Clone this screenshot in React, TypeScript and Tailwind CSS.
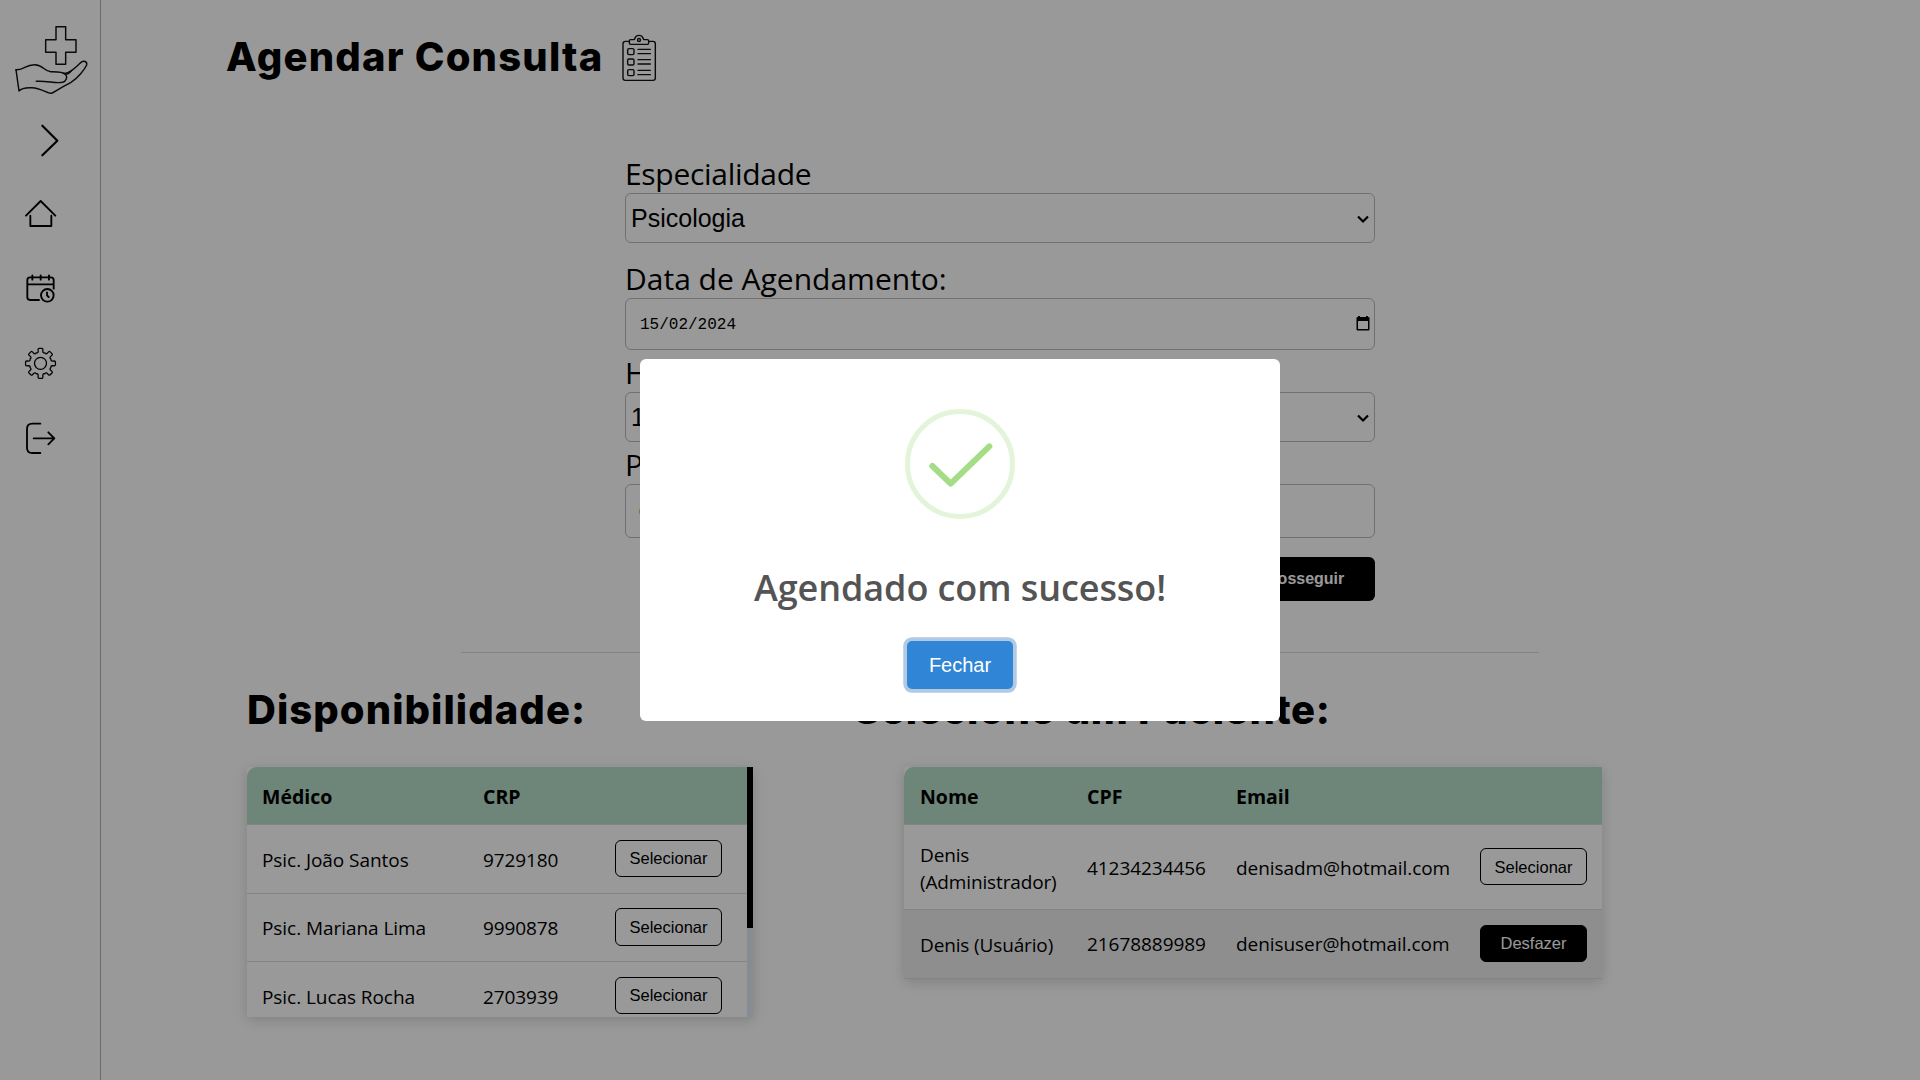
import type { ReactNode } from 'react';

const doctors = [
  { name: 'Psic. João Santos', crp: '9729180' },
  { name: 'Psic. Mariana Lima', crp: '9990878' },
  { name: 'Psic. Lucas Rocha', crp: '2703939' },
];

const patients = [
  { name: 'Denis (Administrador)', cpf: '41234234456', email: 'denisadm@hotmail.com', selected: false },
  { name: 'Denis (Usuário)', cpf: '21678889989', email: 'denisuser@hotmail.com', selected: true },
];

function gearPath(cx: number, cy: number) {
  const at = (deg: number, r: number) => {
    const a = (deg * Math.PI) / 180;
    return `${(cx + r * Math.cos(a)).toFixed(1)} ${(cy + r * Math.sin(a)).toFixed(1)}`;
  };
  let d = '';
  for (let i = 0; i < 8; i++) {
    const a = i * 45 - 90;
    d += `${i === 0 ? 'M' : 'L'}${at(a - 11, 36)} L${at(a - 10, 42)} Q${at(a - 9, 45)} ${at(a - 6, 45)} L${at(a + 6, 45)} Q${at(a + 9, 45)} ${at(a + 10, 42)} L${at(a + 11, 36)} Q${at(a + 15, 31)} ${at(a + 22.5, 34)} Q${at(a + 30, 31)} ${at(a + 34, 36)} `;
  }
  return d + 'Z';
}

function SideIcon({ viewBox, children }: { viewBox: string; children: ReactNode }) {
  return (
    <svg className="ml-[22px] size-[37px]" viewBox={viewBox} fill="none" stroke="black" strokeWidth="5.600" strokeLinecap="round" strokeLinejoin="round">
      {children}
    </svg>
  );
}

function Sidebar() {
  return (
    <aside className="flex w-[101px] shrink-0 flex-col border-r border-[#b5b5b5] pt-5">
      <svg className="ml-[10px] size-[85px] shrink-0" viewBox="0 0 255 255" fill="none" stroke="#111" strokeWidth="4.400" strokeLinejoin="round" strokeLinecap="round">
        <path d="M138 20h29v39h31v38h-31v36h-29V97h-31V59h31z" />
        <path d="M18 149C44 151 44 134 74 134C100 134 102 154 122 155C140 155 158 154 167 163C173 172 169 184 158 187C136 191 112 182 79 184" />
        <path d="M18 149L27 213C38 202 52 204 66 203C92 204 112 220 124 220C132 218 144 207 182 188C204 174 224 148 230 135C232 124 222 121 213 127C200 138 186 157 163 161" />
        <path d="M160 160C174 159 181 155 188 149C182 160 174 164 167 164z" fill="#222" strokeWidth="1.5" />
      </svg>
      <svg className="mt-[15px] ml-10 h-10 w-5 shrink-0" viewBox="120 360 60 120" fill="none" stroke="black" strokeWidth="6.500" strokeLinecap="round" strokeLinejoin="round">
        <path d="M127 377l45 45-45 44" />
      </svg>
      <nav className="mt-[35px] flex flex-col gap-[38px]">
        <SideIcon viewBox="66 585 111 111">
          <path d="M78 647l44-44 44 44M91 647v31h63v-31" />
        </SideIcon>
        <SideIcon viewBox="66 90 111 111">
          <path d="M117 180H90q-8 0-8-8v-52q0-8 8-8h63q8 0 8 8v26M82 133h79M97 106v13M122 106v13M147 106v13" />
          <circle cx="142" cy="166" r="19" />
          <path d="M141 157v9l5 5" />
        </SideIcon>
        <SideIcon viewBox="66 315 111 111">
          <path d={gearPath(121.5, 370)} strokeWidth="3.8" />
          <circle cx="121.5" cy="370" r="18" strokeWidth="3.8" />
        </SideIcon>
        <SideIcon viewBox="66 540 111 111">
          <path d="M121 551H97q-16 0-16 16v56q0 16 16 16h24M101 595h62M145 577l18 18-18 18" />
        </SideIcon>
      </nav>
    </aside>
  );
}

function ClipboardIcon() {
  return (
    <svg className="ml-[17px] h-[50px] w-[38px] shrink-0" viewBox="1230 66 114 150" fill="none" stroke="#111" strokeWidth="4.2" strokeLinecap="round" strokeLinejoin="round">
      <path d="M1258 91h-12q-7 0-7 7v103q0 7 7 7h83q7 0 7-7V98q0-7-7-7h-12" />
      <path d="M1262 100h50q4 0 4-4v-6q0-4-4-4h-9q-3 0-4-5-3-8-12-8t-12 8q-1 5-4 5h-9q-4 0-4 4v6q0 4 4 4z" />
      <circle cx="1287" cy="87" r="4.5" />
      {[113, 144, 176].map((y) => (
        <g key={y}>
          <rect x="1253" y={y} width="19" height="18" rx="4" />
          <path d={`M1284 ${y + 2}h37M1284 ${y + 15}h37`} />
        </g>
      ))}
    </svg>
  );
}

function Chevron() {
  return (
    <svg className="h-2.5 w-3.5" viewBox="0 0 14 10" fill="none" stroke="black" strokeWidth="2.2">
      <path d="M2 2.500l5 5 5-5" />
    </svg>
  );
}

function Label({ children }: { children: ReactNode }) {
  return <div className="h-10 pt-px text-[30px] leading-[40px]">{children}</div>;
}

function SelectBox({ value }: { value: string }) {
  return (
    <div className="flex h-[50px] items-center justify-between rounded-[6px] border border-[#bbb] pt-px pr-1 pl-[5px] font-['Liberation_Sans',sans-serif] text-[25px]">
      <span>{value}</span>
      <Chevron />
    </div>
  );
}

function RowButton({ selected = false }: { selected?: boolean }) {
  return selected ? (
    <button className="h-[37.5px] w-[107px] rounded-[6px] border border-black bg-black font-['Liberation_Sans',sans-serif] text-[16.5px] leading-[34px] text-white">Desfazer</button>
  ) : (
    <button className="h-[37.5px] w-[107px] rounded-[6px] border border-black bg-white font-['Liberation_Sans',sans-serif] text-[16.5px] leading-[34px]">Selecionar</button>
  );
}

function DoctorTable() {
  return (
    <div className="flex h-[250px] w-[506px] overflow-hidden bg-white shadow-[0_3px_12px_rgba(0,0,0,0.16)]">
      <div className="w-[500px] shrink-0">
        <div className="grid h-[58px] grid-cols-[221px_132px_107px] items-center rounded-tl-[10px] border-b border-[#ddd] bg-[#b7decb] pt-0.5 pl-[15px] text-[19.5px] font-bold">
          <span>Médico</span>
          <span>CRP</span>
        </div>
        {doctors.map((d) => (
          <div key={d.crp} className="grid h-[68.6px] grid-cols-[221px_132px_107px] items-center border-b border-[#ddd] pl-[15px] text-[19px]">
            <span className="pt-0.5 tracking-[-0.06px]">{d.name}</span>
            <span className="pt-0.5 tracking-[-0.1px]">{d.crp}</span>
            <div className="-mt-px h-[37.5px]"><RowButton /></div>
          </div>
        ))}
      </div>
      <div className="w-[6px] bg-[#e1e8f4]">
        <div className="h-[161px] bg-black" />
      </div>
    </div>
  );
}

function PatientTable() {
  return (
    <div className="w-[698px] bg-white shadow-[0_3px_12px_rgba(0,0,0,0.16)]">
      <div className="grid h-[58px] grid-cols-[167px_149px_244px_107px] items-center rounded-tl-[10px] border-b border-[#ddd] bg-[#b7decb] pt-0.5 pl-4 text-[19.5px] font-bold">
        <span>Nome</span>
        <span>CPF</span>
        <span>Email</span>
      </div>
      {patients.map((p) => (
        <div
          key={p.cpf}
          className={`grid grid-cols-[167px_149px_244px_107px] items-center border-b border-[#ddd] pl-4 text-[19px] leading-[27px] ${p.selected ? 'h-[68.5px] bg-[#ededed]' : 'h-[85px]'}`}
        >
          <span className="w-[145px] pt-[3px] tracking-[-0.14px]">{p.name}</span>
          <span className="pt-0.5 tracking-[-0.06px]">{p.cpf}</span>
          <span className="pt-0.5 tracking-[-0.06px]">{p.email}</span>
          <div className="-mt-px h-[37.5px]"><RowButton selected={p.selected} /></div>
        </div>
      ))}
    </div>
  );
}

function SuccessModal() {
  return (
    <div className="fixed inset-0 flex items-center justify-center bg-black/40">
      <div className="flex h-[362px] w-[640px] flex-col items-center rounded-[6px] bg-white pt-[50px]">
        <svg className="size-[110px]" viewBox="0 0 330 330" fill="none">
          <circle cx="165" cy="165" r="157.5" stroke="#a5dc86" strokeOpacity="0.3" strokeWidth="15" />
          <path d="M82 171l55 53 116-112" stroke="#a5dc86" strokeWidth="18" strokeLinecap="round" strokeLinejoin="round" />
        </svg>
        <h2 className="mt-[45px] text-[36px] leading-[48px] font-semibold tracking-[-0.09px] text-[#545454]">Agendado com sucesso!</h2>
        <button className="mt-[29px] h-12 w-[106px] shrink-0 rounded-[5px] bg-[#3085d6] font-['Liberation_Sans',sans-serif] text-[20px] text-white shadow-[0_0_0_3.75px_rgba(100,150,200,0.5)]">
          Fechar
        </button>
      </div>
    </div>
  );
}

export default function App() {
  return (
    <div className="flex h-screen w-full overflow-hidden bg-white font-['Open_Sans','Noto_Sans',sans-serif] text-black">
      <Sidebar />
      <main className="flex grow flex-col pt-[33px]">
        <header className="flex h-[50px] pl-[125px]">
          <h1 className="font-['Inter',sans-serif] text-[40px] leading-[48px] font-extrabold tracking-[1.2px] whitespace-nowrap">Agendar Consulta</h1>
          <ClipboardIcon />
        </header>

        <form className="mt-[70px] ml-[524px] flex w-[750px] flex-col">
          <Label><span className="tracking-[-0.3px]">Especialidade</span></Label>
          <SelectBox value="Psicologia" />
          <div className="mt-[15px]"><Label>Data de Agendamento:</Label></div>
          <div className="flex h-[52px] items-center justify-between rounded-[6px] border border-[#bbb] pr-[4px] pl-[14px]">
            <span className="pt-px font-['Liberation_Mono',monospace] text-[16px]">15/02/2024</span>
            <svg className="mb-[2px] h-[15px] w-[14px]" viewBox="0 0 14 15">
              <path d="M2 0h2v1h6V0h2v1h.5Q13.500 1 13.500 2v11.500q0 1-1 1h-11q-1 0-1-1V2q0-1 1-1H2zM2 5v8h10V5z" fillRule="evenodd" />
            </svg>
          </div>
          <div className="mt-0.5"><Label>Horário:</Label></div>
          <SelectBox value="10:00" />
          <div className="mt-0.5"><Label>Paciente:</Label></div>
          <div className="flex h-[54px] items-center rounded-[6px] border border-[#bbb] pl-[13px] font-['Liberation_Sans',sans-serif] text-[16px]">denisuser@hotmail.com</div>
          <button type="button" className="mt-[19px] h-11 w-[145px] self-end rounded-[6px] bg-black font-['Liberation_Sans',sans-serif] text-[16px] font-bold text-white">
            Prosseguir
          </button>
        </form>

        <hr className="mt-[51px] ml-[360px] w-[1078px] border-[#ddd]" />

        <div className="mt-[33px] flex pl-[146px]">
          <section className="w-[608px] shrink-0">
            <h2 className="mb-[33px] font-['Inter',sans-serif] text-[40px] leading-[48px] font-extrabold tracking-[1.05px]">Disponibilidade:</h2>
            <DoctorTable />
          </section>
          <section className="shrink-0">
            <h2 className="mb-[33px] -ml-px font-['Inter',sans-serif] text-[40px] leading-[48px] font-extrabold tracking-[0.68px]">Selecione um Paciente:</h2>
            <div className="ml-[49px]">
              <PatientTable />
            </div>
          </section>
        </div>
      </main>
      <SuccessModal />
    </div>
  );
}
